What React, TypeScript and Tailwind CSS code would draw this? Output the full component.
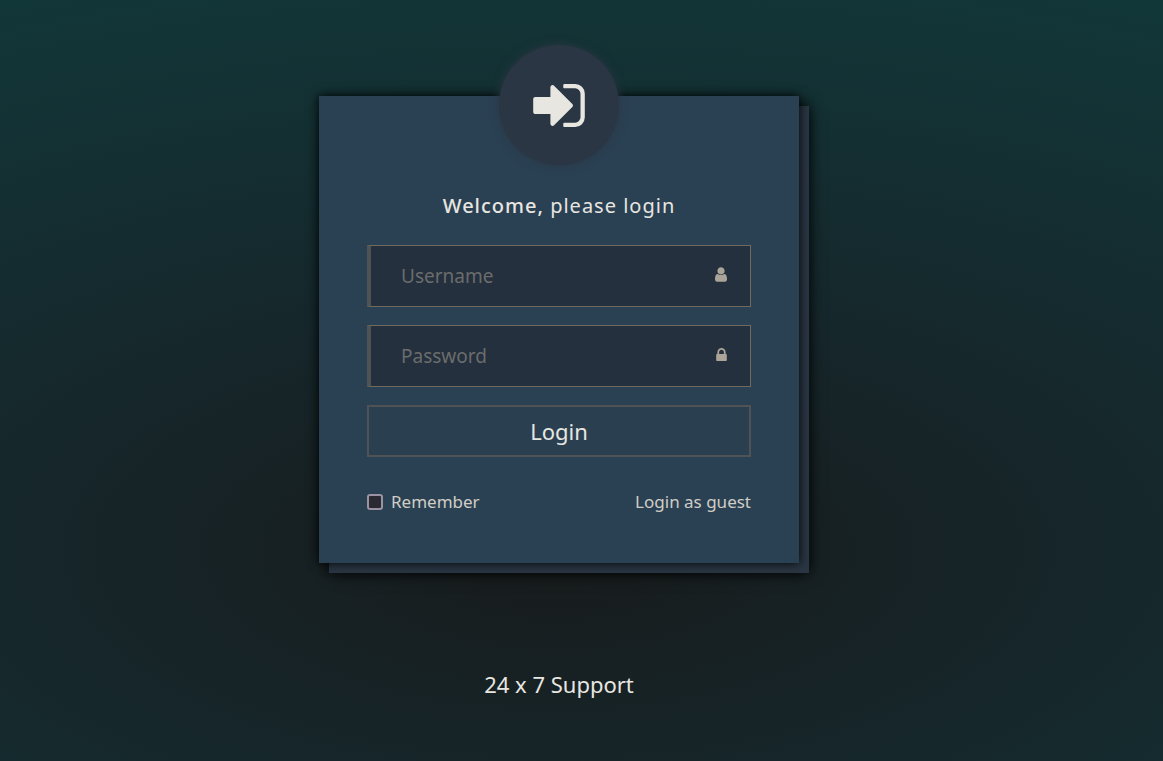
import React from 'react';

function SignInIcon() {
  return (
    <svg viewBox="0 64 1536 1280" className="h-[43px] w-[52px] fill-[#e8e6e1]" aria-hidden="true">
      <path d="M1184 704q0 26-19 45l-544 544q-19 19-45 19t-45-19-19-45v-288h-448q-26 0-45-19t-19-45v-384q0-26 19-45t45-19h448v-288q0-26 19-45t45-19 45 19l544 544q19 19 19 45zm352-352v704q0 119-84.5 203.5t-203.5 84.5h-320q-13 0-22.5-9.5t-9.5-22.5q0-4-1-20t-.5-26.5 3-23.5 10-19.5 20.5-6.5h320q66 0 113-47t47-113v-704q0-66-47-113t-113-47h-312l-11.5-1-11.5-3-8-5.5-7-9-2-13.5q0-4-1-20t-.5-26.5 3-23.5 10-19.5 20.5-6.5h320q119 0 203.5 84.5t84.5 203.5z" />
    </svg>
  );
}

function UserIcon() {
  return (
    <svg viewBox="0 0 1280 1536" className="h-[15px] w-3 fill-[#aba499]" aria-hidden="true">
      <path d="M1280 1271q0 109-62.5 187t-150.5 78h-854q-88 0-150.5-78t-62.5-187q0-85 8.5-160.5t31.5-152 58.5-131 94-89 134.5-34.5q131 128 313 128t313-128q76 0 134.5 34.5t94 89 58.5 131 31.5 152 8.5 160.5zm-256-887q0 159-112.5 271.5t-271.5 112.5-271.5-112.5-112.5-271.5 112.5-271.5 271.5-112.5 271.5 112.5 112.5 271.5z" />
    </svg>
  );
}

function LockIcon() {
  return (
    <svg viewBox="0 128 1152 1408" className="h-[13px] w-[11px] fill-[#aba499]" aria-hidden="true">
      <path d="M320 768h512v-192q0-106-75-181t-181-75-181 75-75 181v192zm832 96v576q0 40-28 68t-68 28h-960q-40 0-68-28t-28-68v-576q0-40 28-68t68-28h32v-192q0-184 132-316t316-132 316 132 132 316v192h32q40 0 68 28t28 68z" />
    </svg>
  );
}

type FieldProps = { label: string; type: string; children: React.ReactNode };

function Field({ label, type, children }: FieldProps) {
  return (
    <label className="flex items-center border border-l-4 border-[#736a5f] border-l-[#4f5356] bg-[#24303d] pr-[23px] pl-[30px]">
      <input
        type={type}
        aria-label={label}
        placeholder={label}
        className="h-[60px] min-w-0 flex-1 bg-transparent text-[19px] text-[#e8e6e1] outline-none placeholder:text-[#6b6c6c]"
      />
      <span className="pb-[3px]">{children}</span>
    </label>
  );
}

export default function App() {
  return (
    <main className="flex min-h-screen flex-col items-center bg-[radial-gradient(1355px_605px_at_48%_551px,#181b1c,#16262a_39%,#123739)] pt-24 pr-[45px] font-['Noto_Sans',sans-serif] text-[#e8e6e1]">
      <form
        onSubmit={(e) => e.preventDefault()}
        className="flex w-full max-w-[480px] flex-col bg-[#2a4153] px-12 pb-12 shadow-[0_0_10px_#000,10px_10px_0_#2a3644,10px_10px_14px_#000]"
      >
        <div className="-mt-[51px] flex size-[120px] items-center justify-center self-center rounded-full bg-[#2b3644] shadow-[0_0_10px_#2b3644]">
          <SignInIcon />
        </div>
        <h1 className="mt-[26px] text-center text-xl leading-[30px] tracking-wider">
          <strong className="font-medium">Welcome,</strong> please login
        </h1>
        <div className="mt-6 flex flex-col gap-[18px]">
          <Field label="Username" type="text">
            <UserIcon />
          </Field>
          <Field label="Password" type="password">
            <LockIcon />
          </Field>
          <button type="submit" className="h-[52px] border-2 border-[#4f5356] bg-[#2a4051] text-[22px]">
            Login
          </button>
        </div>
        <div className="mt-8 flex items-center justify-between text-[17px] leading-[26px] text-[#d1cdc6]">
          <label className="flex items-center gap-2">
            <input
              type="checkbox"
              className="size-4 appearance-none rounded-[3px] border-2 border-[#9b93a3] bg-[#2b2a33] checked:bg-[#9b93a3]"
            />
            Remember
          </label>
          <a href="#guest">Login as guest</a>
        </div>
      </form>
      <a href="#support" className="mt-[105px] text-[22px] leading-8">
        24 x 7 Support
      </a>
    </main>
  );
}
